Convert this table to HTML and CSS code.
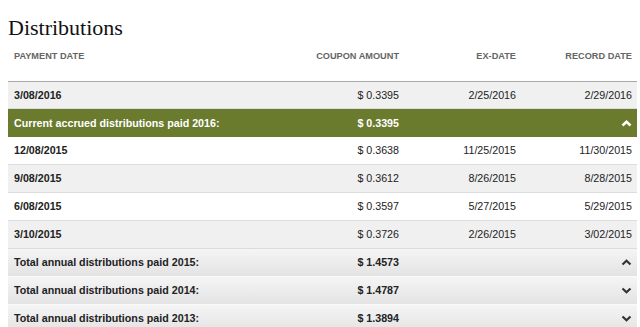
FILE: index.html
```html
<!DOCTYPE html>
<html>
<head>
<meta charset="utf-8">
<link rel="stylesheet" href="styles.css">
</head>
<body>
<div class="page">
  <h1 class="title">Distributions</h1>
  <div class="table">
    <div class="row head">
      <div class="c1">PAYMENT DATE</div>
      <div class="c2">COUPON AMOUNT</div>
      <div class="c3">EX-DATE</div>
      <div class="c4">RECORD DATE</div>
    </div>
    <div class="row data alt first">
      <div class="c1 b">3/08/2016</div>
      <div class="c2">$ 0.3395</div>
      <div class="c3">2/25/2016</div>
      <div class="c4">2/29/2016</div>
    </div>
    <div class="row total current">
      <div class="c1 b">Current accrued distributions paid 2016:</div>
      <div class="c2 b">$ 0.3395</div>
      <div class="c3"></div>
      <div class="c4 ico"><svg width="11" height="7" viewBox="0 0 11 7"><polyline points="1.5,5.5 5.5,1.8 9.5,5.5" fill="none" stroke="#fff" stroke-width="2.6"/></svg></div>
    </div>
    <div class="row data">
      <div class="c1 b">12/08/2015</div>
      <div class="c2">$ 0.3638</div>
      <div class="c3">11/25/2015</div>
      <div class="c4">11/30/2015</div>
    </div>
    <div class="row data alt">
      <div class="c1 b">9/08/2015</div>
      <div class="c2">$ 0.3612</div>
      <div class="c3">8/26/2015</div>
      <div class="c4">8/28/2015</div>
    </div>
    <div class="row data">
      <div class="c1 b">6/08/2015</div>
      <div class="c2">$ 0.3597</div>
      <div class="c3">5/27/2015</div>
      <div class="c4">5/29/2015</div>
    </div>
    <div class="row data alt">
      <div class="c1 b">3/10/2015</div>
      <div class="c2">$ 0.3726</div>
      <div class="c3">2/26/2015</div>
      <div class="c4">3/02/2015</div>
    </div>
    <div class="row total">
      <div class="c1 b">Total annual distributions paid 2015:</div>
      <div class="c2 b">$ 1.4573</div>
      <div class="c3"></div>
      <div class="c4 ico"><svg width="11" height="7" viewBox="0 0 11 7"><polyline points="1.5,5.5 5.5,1.8 9.5,5.5" fill="none" stroke="#333" stroke-width="2.2"/></svg></div>
    </div>
    <div class="row total">
      <div class="c1 b">Total annual distributions paid 2014:</div>
      <div class="c2 b">$ 1.4787</div>
      <div class="c3"></div>
      <div class="c4 ico"><svg width="11" height="7" viewBox="0 0 11 7"><polyline points="1.5,1.5 5.5,5.2 9.5,1.5" fill="none" stroke="#333" stroke-width="2.2"/></svg></div>
    </div>
    <div class="row total">
      <div class="c1 b">Total annual distributions paid 2013:</div>
      <div class="c2 b">$ 1.3894</div>
      <div class="c3"></div>
      <div class="c4 ico"><svg width="11" height="7" viewBox="0 0 11 7"><polyline points="1.5,1.5 5.5,5.2 9.5,1.5" fill="none" stroke="#333" stroke-width="2.2"/></svg></div>
    </div>
  </div>
</div>
</body>
</html>
```

FILE: styles.css
```css
html, body {
  margin: 0;
  padding: 0;
  background: #fff;
}
.page {
  padding: 0 3px 0 8px;
  font-family: "Liberation Sans", Arial, sans-serif;
  color: #222;
}
.title {
  margin: 0;
  padding-top: 15px;
  font-family: "Liberation Serif", "Times New Roman", serif;
  font-weight: normal;
  font-size: 22px;
  line-height: 26px;
  color: #111;
}
.row {
  display: grid;
  grid-template-columns: 250px 147px 117px 115px;
  align-items: center;
  font-size: 10.7px;
  line-height: 13px;
}
.row > div {
  padding: 0 6px;
  white-space: nowrap;
}
.row .c1 { text-align: left; }
.row .c2, .row .c3 { text-align: right; }
.row .c4 { text-align: right; padding-right: 5px; }
.b { font-weight: bold; }
.head {
  height: 40px;
  align-items: start;
  padding-top: 9px;
  box-sizing: border-box;
  font-size: 9.2px;
  line-height: 12px;
  font-weight: bold;
  color: #656565;
}
.data {
  height: 28px;
  box-sizing: border-box;
  border-bottom: 1px solid #dcdcdc;
  background: #fff;
  color: #222;
}
.data.alt { background: #f0f0f0; }
.data.first {
  border-top: 1px solid #a9a9a9;
}
.total {
  height: 28px;
  box-sizing: border-box;
  border-bottom: 1px solid #fafafa;
  background: linear-gradient(#f5f5f5, #e3e3e3);
  color: #222;
}
.total.current {
  background: #6a7b2d;
  color: #fff;
  border-bottom: none;
}
.ico {
  display: flex;
  justify-content: flex-end;
  align-items: center;
}
.ico svg { display: block; }
```
